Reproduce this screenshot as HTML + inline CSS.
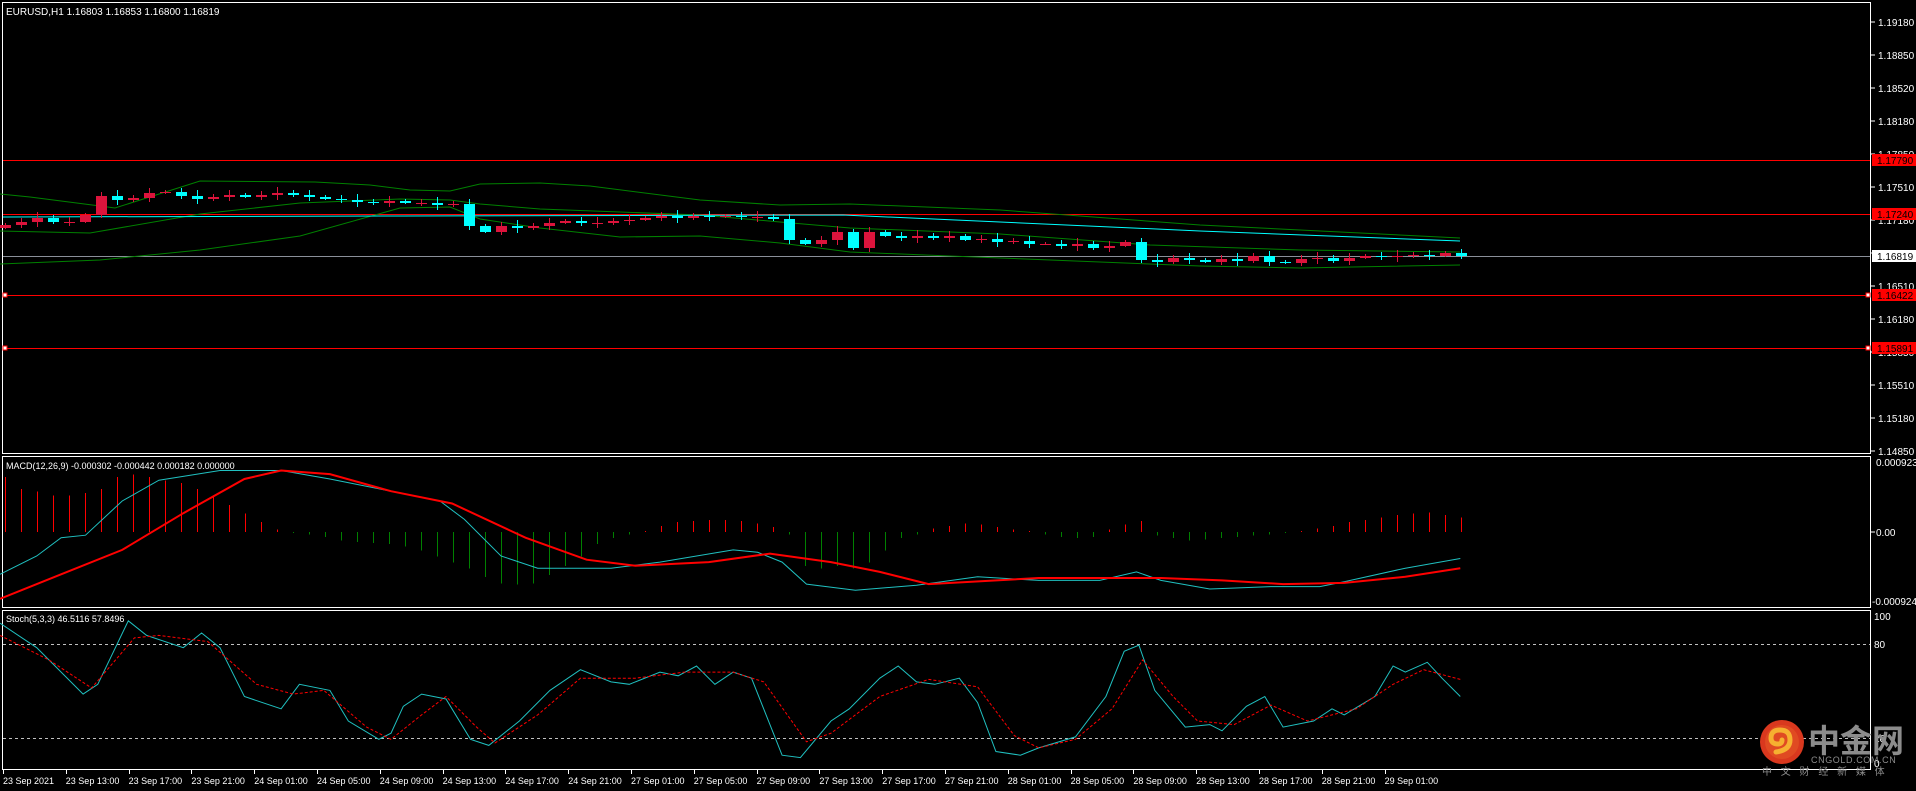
<!DOCTYPE html>
<html><head><meta charset="utf-8">
<style>
html,body{margin:0;padding:0;background:#000;width:1916px;height:791px;overflow:hidden}
svg{display:block}
text{font-family:"Liberation Sans","Noto Sans CJK SC",sans-serif}
</style></head>
<body>
<svg id="s" width="1916" height="791" xmlns="http://www.w3.org/2000/svg"></svg>
<script>
(function(){
var S=1.222,o=[],i,x,y;
function L(x1,y1,x2,y2,c,w,d){o.push('<line x1="'+x1+'" y1="'+y1+'" x2="'+x2+'" y2="'+y2+'" stroke="'+c+'" stroke-width="'+(w||1)+'"'+(d?' stroke-dasharray="'+d+'"':'')+' shape-rendering="crispEdges"/>');}
function R(x,y,w,h,f,st){o.push('<rect x="'+x+'" y="'+y+'" width="'+w+'" height="'+h+'" fill="'+f+'"'+(st?' stroke="'+st+'"':'')+' shape-rendering="crispEdges"/>');}
function T(x,y,t,c,fs,a){o.push('<text x="'+x+'" y="'+y+'" fill="'+c+'" font-size="'+fs+'"'+(a?' '+a:'')+'>'+t+'</text>');}
function P(pts,c,w,sc,d){var s=pts.map(function(p){return (p[0]*sc).toFixed(1)+','+(p[1]*sc).toFixed(1)}).join(' ');o.push('<polyline points="'+s+'" fill="none" stroke="'+c+'" stroke-width="'+(w||1)+'"'+(d?' stroke-dasharray="'+d+'"':'')+'/>');}
R(2.5,2.5,1868,451,'#000','#fff');
R(2.5,456.5,1868,151,'#000','#fff');
R(2.5,610.5,1868,159,'#000','#fff');
var pl=['1.19180','1.18850','1.18520','1.18180','1.17850','1.17510','1.17180','1.16850','1.16510','1.16180','1.15850','1.15510','1.15180','1.14850'];
for(i=0;i<pl.length;i++){y=22+i*33;L(1871,y,1875,y,'#fff');T(1878,y+4,pl[i],'#fff',10);}
[[160,'1.17790'],[214,'1.17240'],[295,'1.16422'],[348,'1.15891']].forEach(function(l){L(3,l[0]+.5,1870,l[0]+.5,'#ff0000');R(1872,l[0]-6,44,12,'#ff0000');T(1877,l[0]+4,l[1],'#000',10);});
L(3,256.5,1870,256.5,'#8a8f99');R(1872,250,44,12,'#fff');T(1877,260,'1.16819','#000',10);
R(3,293,4,4,'#fff','#f00');R(3,346,4,4,'#fff','#f00');R(1866,293,4,4,'#fff','#f00');R(1866,346,4,4,'#fff','#f00');
T(6,15,'EURUSD,H1  1.16803 1.16853 1.16800 1.16819','#fff',10);
P([[0,194],[30,197],[100,206],[115,208],[200,181],[315,182],[370,185],[410,190],[450,191],[480,184],[540,183],[590,186],[700,200],[780,205],[850,204],[1000,210],[1200,225],[1460,238]],'#008000',1,1);
P([[0,231],[90,233],[200,214],[300,203],[400,199],[450,200],[480,204],[540,209],[620,212],[700,215],[780,222],[850,228],[1000,234],[1150,245],[1300,250],[1460,252]],'#008000',1,1);
P([[0,264],[100,260],[200,250],[300,236],[400,208],[450,207],[480,219],[540,228],[620,237],[700,236],[780,243],[850,252],[1000,258],[1100,262],[1200,266],[1300,268],[1460,265]],'#008000',1,1);
P([[3,217],[400,216],[843,215],[1000,222],[1200,231],[1460,241]],'#00ffff',1,1);
var c=[225,222,218,222,222,215,196,200,198,193,192,196,199,197,195,197,195,193,195,197,199,200,202,203,201,203,203,205,204,226,232,226,228,226,223,221,223,223,221,220,218,216,218,216,217,216,217,217,219,240,244,240,232,248,232,236,238,236,238,236,240,239,242,241,244,244,246,244,248,246,242,260,262,258,260,262,259,261,256,262,263,259,258,261,258,256,257,256,255,256,253,256];
var prev=228;
for(i=0;i<c.length;i++){x=5+i*16;var op=prev,cl=c[i],tp=Math.min(op,cl),bt=Math.max(op,cl);var col=cl>op?'#00ffff':'#dc143c';var h=((i*37)%5)+2;L(x+.5,tp-h,x+.5,bt+h-1,col);if(bt-tp<1)L(x-5,tp+.5,x+6,tp+.5,col);else R(x-5,tp,11,bt-tp,col);prev=cl;}
T(6,469,'MACD(12,26,9) -0.000302 -0.000442 0.000182 0.000000','#fff',9);
L(1871,532,1875,532,'#fff');T(1876,466,'0.000923','#fff',10);T(1876,536,'0.00','#fff',10);T(1872,605,'-0.000924','#fff',10);
var hv=[45,35,33,30,30,32,35,45,47,45,42,40,35,30,22,15,8,2,-1,-2,-4,-7,-8,-9,-10,-12,-15,-20,-25,-30,-37,-42,-43,-42,-35,-28,-20,-10,-5,-2,1,5,8,9,10,10,9,7,4,-2,-28,-30,-28,-30,-25,-15,-5,-2,3,5,7,6,4,2,1,-2,-4,-5,-4,2,6,9,-3,-5,-7,-6,-5,-4,-3,-2,-1,1,3,5,8,10,12,14,15,16,14,12];
for(i=0;i<hv.length;i++){x=5+i*16;var v=hv[i]*S;if(v>0)L(x+.5,532-v,x+.5,532,'#ff0000');else L(x+.5,532,x+.5,532-v,'#008000');}
P([[0,470],[30,455],[50,440],[70,438],[100,410],[130,393],[180,385],[230,385],[270,392],[310,400],[360,410],[380,425],[410,455],[440,465],[500,465],[540,460],[600,450],[620,452],[640,460],[660,478],[700,483],[750,479],[800,472],[850,475],[900,475],[930,468],[950,475],[990,482],[1040,480],[1080,480],[1100,476],[1150,465],[1195,457]],'#20c0c0',1,S);
P([[0,490],[50,470],[100,450],[150,420],[200,392],[230,385],[270,388],[320,402],[370,412],[430,440],[480,458],[520,463],[580,460],[630,453],[680,460],[720,468],[760,478],[850,473],[950,473],[1000,475],[1050,478],[1100,477],[1150,472],[1195,465]],'#ff0000',2,S);
T(6,622,'Stoch(5,3,3) 46.5116 57.8496','#fff',9);
L(3,644.5,1870,644.5,'#c0c0c0',1,'3,3');L(3,738.5,1870,738.5,'#c0c0c0',1,'3,3');
T(1874,620,'100','#fff',10);T(1874,648,'80','#fff',10);T(1874,742,'20','#fff',10);T(1874,767,'0','#fff',10);
P([[0,510],[30,530],[68,568],[80,560],[105,508],[120,520],[150,530],[165,518],[180,530],[200,570],[230,580],[245,560],[270,565],[285,590],[310,605],[320,600],[330,578],[345,568],[365,572],[385,605],[400,610],[425,590],[450,565],[475,548],[500,558],[515,560],[540,550],[555,553],[570,545],[585,560],[600,550],[615,555],[640,618],[655,620],[680,590],[695,580],[720,555],[735,545],[750,558],[765,560],[785,555],[800,575],[815,615],[835,618],[850,612],[880,603],[905,570],[920,533],[932,528],[945,565],[970,595],[990,593],[1000,598],[1020,578],[1035,570],[1050,595],[1075,590],[1090,580],[1100,585],[1125,570],[1140,545],[1150,550],[1168,542],[1180,555],[1195,570]],'#20c0c0',1,S);
P([[0,520],[40,540],[75,563],[110,522],[130,520],[170,525],[210,560],[240,568],[265,565],[300,595],[320,605],[345,585],[365,570],[390,595],[405,608],[440,585],[475,555],[520,555],[560,550],[600,550],[625,558],[660,607],[680,600],[720,570],[760,556],[800,562],[830,602],[850,612],[880,605],[910,580],[935,540],[960,570],[980,590],[1010,593],[1040,577],[1070,590],[1110,580],[1140,560],[1165,548],[1195,556]],'#ff0000',1,S,'3,2');
var tl=['23 Sep 2021','23 Sep 13:00','23 Sep 17:00','23 Sep 21:00','24 Sep 01:00','24 Sep 05:00','24 Sep 09:00','24 Sep 13:00','24 Sep 17:00','24 Sep 21:00','27 Sep 01:00','27 Sep 05:00','27 Sep 09:00','27 Sep 13:00','27 Sep 17:00','27 Sep 21:00','28 Sep 01:00','28 Sep 05:00','28 Sep 09:00','28 Sep 13:00','28 Sep 17:00','28 Sep 21:00','29 Sep 01:00'];
for(i=0;i<tl.length;i++){x=3+i*62.8;L(Math.round(x)+.5,770,Math.round(x)+.5,774,'#fff');T(x,784,tl[i],'#fff',9);}
o.push('<circle cx="1782" cy="742" r="22" fill="#d9381e"/><circle cx="1782" cy="742" r="17" fill="#e04a22"/>');
o.push('<path d="M1776 752 q14 -2 14 -12 q0 -10 -10 -10 q-9 0 -9 8 q0 6 7 6 q4 0 4 -4" fill="none" stroke="#f6b030" stroke-width="5" stroke-linecap="round"/>');
T(1808,752,'中金网','#8c8c8c',32,'font-weight="bold"');
T(1811,763,'CNGOLD.COM.CN','#8c8c8c',9,'letter-spacing="0.6"');
T(1762,775,'中 文 财 经 新 媒 体','#8c8c8c',10,'letter-spacing="3"');
document.getElementById('s').innerHTML=o.join('');
})();
</script>
</body></html>
